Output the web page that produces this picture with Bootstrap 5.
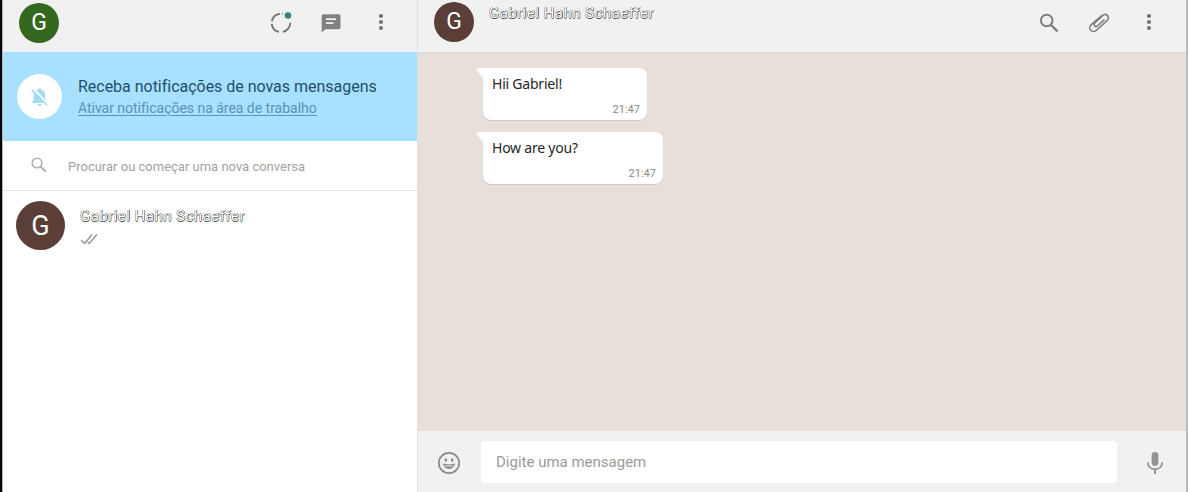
<!DOCTYPE html>
<html lang="pt-BR">
<head>
<meta charset="utf-8">
<meta name="viewport" content="width=device-width, initial-scale=1">
<title>Conversas</title>
<link href="https://cdn.jsdelivr.net/npm/bootstrap@5.3.0/dist/css/bootstrap.min.css" rel="stylesheet">
<style>
body{font-family:Roboto,"Liberation Sans",sans-serif;background:#fff;color:#333;line-height:20px}
.app{height:492px;border-left:2px solid #080808;border-right:2px solid #b9bbbd}
.side{width:416px;border-left:1px solid #b5b5b5;border-right:1px solid #e2e0df}
.bar{height:52px;background:#f1f1f1}
.chatbar{height:53px;border-bottom:1px solid #dcd7d4}
.bar svg{display:block}
.avatar{width:40px;height:40px;font-size:23px;color:#fff;background:#5a3e37}
.avatar-me{background:#35681f}
.avatar-lg{width:49px;height:49px;font-size:27px}
.notice{height:89px;background:#a8e0ff}
.bell{width:45px;height:45px;background:#fff}
.notice-title{font-size:16px;color:#1d506c;letter-spacing:-.02px;line-height:22px}
.notice-link{font-size:14px;color:#5a93b5;letter-spacing:-.02px;line-height:21px;text-underline-offset:2px}
.search{height:50px;border-bottom:1px solid #e8e8e8;color:#a3a3a3;font-size:13px;letter-spacing:0}
.who{font-size:15px;letter-spacing:.48px;color:#fff;line-height:20px;text-shadow:.6px 0 0 #222,-.4px 0 0 #777,0 .5px 0 #555}
.room{background:#e7dfd9;padding:15px 0 0 65px}
.bubble{height:52px;background:#fff;border-radius:0 8px 8px 8px;box-shadow:0 1px 1px #cfc7c2;margin-bottom:12px;font:14px/20px "Noto Sans",sans-serif;letter-spacing:-.22px;color:#262626}
.tail{left:-7px;top:0}
.b1{width:164px}.b2{width:180px}
.hour{right:7px;bottom:3px;font:11px/14px Roboto,sans-serif;color:#8c8c8c;letter-spacing:0}
.compose{height:61px;background:#f1f1f1}
.entry{width:636px;height:42px;border-radius:4px;background:#fff;color:#9b9b9b;font-size:15px;letter-spacing:0;padding-left:15px}
</style>
<script src="https://cdn.jsdelivr.net/npm/bootstrap@5.3.0/dist/js/bootstrap.bundle.min.js"></script>
</head>
<body class="overflow-hidden">
<div class="app d-flex">
  <aside class="side d-flex flex-column flex-shrink-0">
    <header class="bar d-flex align-items-center flex-shrink-0" style="padding:0 24px 6px 16px">
      <div class="avatar avatar-me rounded-circle d-flex align-items-center justify-content-center">G</div>
      <div class="d-flex ms-auto" style="gap:26px">
        <svg width="24" height="24" viewBox="0 0 24 24" fill="none" stroke="#737777" stroke-width="1.9"><path d="M2.9 10.2A9.3 9.3 0 0 1 10.8 2.7M2.7 12.8a9.3 9.3 0 0 0 7.3 8.1M13.8 20.9a9.3 9.3 0 0 0 7.5-9.1M13 2.7l.7.1"/><circle cx="19" cy="4.5" r="3.3" fill="#2f8580" stroke="none"/></svg>
        <svg width="24" height="24" viewBox="0 0 24 24"><path fill="#7f8282" d="M4.5 3.2h15.2a1.8 1.8 0 0 1 1.8 1.8v11.5a1.8 1.8 0 0 1-1.8 1.8H6.3l-3.6 3.2V5a1.8 1.8 0 0 1 1.8-1.8zM7 7.2v1.9h10V7.2zm0 4v1.9h7.4v-1.9z" fill-rule="evenodd"/></svg>
        <svg width="24" height="24" viewBox="0 0 24 24" fill="#717575"><circle cx="12" cy="5" r="2.1"/><circle cx="12" cy="11" r="2.1"/><circle cx="12" cy="17" r="2.1"/></svg>
      </div>
    </header>
    <section class="notice d-flex align-items-center flex-shrink-0" style="padding-left:14px">
      <div class="bell rounded-circle d-flex align-items-center justify-content-center">
        <svg width="22" height="22" viewBox="0 0 22 22"><path fill="#a4dcf8" d="M3.2 17v-1.3l1.5-1.5V9.5c0-3.2 1.6-5.4 4.4-6V2.4h2.8v1.1c2.8.6 4.4 2.8 4.4 6v4.7l1.5 1.5V17zM8.7 18h4c0 2.7-4 2.7-4 0z"/><path stroke="#fff" stroke-width="2" d="M4 2.5l15 15.8"/><path stroke="#a4dcf8" stroke-width="1.5" d="M2.8 3.6L18 19"/></svg>
      </div>
      <div style="padding:2px 0 0 16px">
        <div class="notice-title">Receba notificações de novas mensagens</div>
        <a href="#" class="notice-link d-block">Ativar notificações na área de trabalho</a>
      </div>
    </section>
    <div class="search d-flex align-items-center flex-shrink-0" style="padding-left:27px">
      <svg width="18" height="18" viewBox="0 0 18 18" fill="none" stroke="#b2b2b2" stroke-width="1.6" style="margin-bottom:1px"><circle cx="7" cy="7" r="4.8"/><path d="M10.5 10.5l5.2 5.2" stroke-width="2"/></svg>
      <span style="padding:2px 0 0 20px">Procurar ou começar uma nova conversa</span>
    </div>
    <div class="d-flex" style="padding:10px 0 0 13px">
      <div class="avatar avatar-lg rounded-circle d-flex align-items-center justify-content-center">G</div>
      <div style="padding:5px 0 0 15px">
        <div class="who">Gabriel Hahn Schaeffer</div>
        <svg class="d-block" width="18" height="14" viewBox="0 0 18 14" fill="none" stroke="#999" stroke-width="1.5" style="margin-top:6px"><path d="M1 8.2l3.6 3.3L12 2.5M7.6 10l1.6 1.5 7.8-9"/></svg>
      </div>
    </div>
  </aside>
  <main class="flex-grow-1 d-flex flex-column">
    <header class="bar chatbar d-flex flex-shrink-0" style="padding:2px 25px 0 16px">
      <div class="avatar rounded-circle d-flex align-items-center justify-content-center">G</div>
      <div class="who" style="padding:1px 0 0 15px">Gabriel Hahn Schaeffer</div>
      <div class="d-flex ms-auto" style="gap:26px;padding-top:9px">
        <svg width="24" height="24" viewBox="0 0 24 24" fill="none" stroke="#7c7f7f"><circle cx="9.7" cy="9.5" r="5.8" stroke-width="2"/><path d="M14 14l6.5 6.3" stroke-width="2.4"/></svg>
        <svg width="24" height="24" viewBox="0 0 24 24" fill="none" stroke="#7c7f7f" stroke-width="1.6" stroke-linecap="round"><path d="M14.5 5.1L4 14.2a3.8 3.8 0 0 0 5.2 5.6L20.3 9.6a3.3 3.3 0 0 0 .2-4.7 3.3 3.3 0 0 0-4.6-.1L7.8 12.3a2 2 0 0 0 2.7 3L17 9.2" transform="translate(0 -.3)"/></svg>
        <svg width="24" height="24" viewBox="0 0 24 24" fill="#717575"><circle cx="12" cy="5" r="2.1"/><circle cx="12" cy="11" r="2.1"/><circle cx="12" cy="17" r="2.1"/></svg>
      </div>
    </header>
    <section class="room flex-grow-1">
      <div class="bubble b1 position-relative" style="padding:6px 9px"><svg class="tail position-absolute" width="8" height="12" viewBox="0 0 8 12"><path fill="#fff" d="M1 0h7v12L.4 1.5Q0 0 1 0z"/></svg>Hii Gabriel!<span class="hour position-absolute">21:47</span></div>
      <div class="bubble b2 position-relative" style="padding:6px 9px"><svg class="tail position-absolute" width="8" height="12" viewBox="0 0 8 12"><path fill="#fff" d="M1 0h7v12L.4 1.5Q0 0 1 0z"/></svg>How are you?<span class="hour position-absolute">21:47</span></div>
    </section>
    <footer class="compose d-flex align-items-center flex-shrink-0" style="padding:0 19px 0">
      <svg width="24" height="24" viewBox="0 0 24 24" fill="none" stroke="#8b8987" style="margin-top:2px"><circle cx="12" cy="12" r="10.2" stroke-width="1.7"/><g fill="#8b8987" stroke="none"><ellipse cx="8.8" cy="9" rx="1.3" ry="1.8"/><ellipse cx="15.2" cy="9" rx="1.3" ry="1.8"/><path d="M5.8 12.6c3.8 1.1 8.6 1.1 12.4 0-.7 3.7-3.2 5.4-6.2 5.4s-5.5-1.7-6.2-5.4z"/></g><path stroke="#f1f1f1" d="M7.4 14.6c3 .7 6.2.7 9.2 0"/></svg>
      <div class="entry d-flex align-items-center" style="margin-left:20px">Digite uma mensagem</div>
      <svg class="ms-auto" width="24" height="26" viewBox="0 0 24 26" fill="none" stroke="#939393" style="margin-top:2px"><rect x="8.6" y="2" width="6.8" height="14" rx="3.4" fill="#939393" stroke="none"/><path stroke-width="1.9" d="M4.8 12.5c.2 4 3.2 6.8 7.2 6.8s7-2.8 7.2-6.8M12 19v5"/></svg>
    </footer>
  </main>
</div>
</body>
</html>
